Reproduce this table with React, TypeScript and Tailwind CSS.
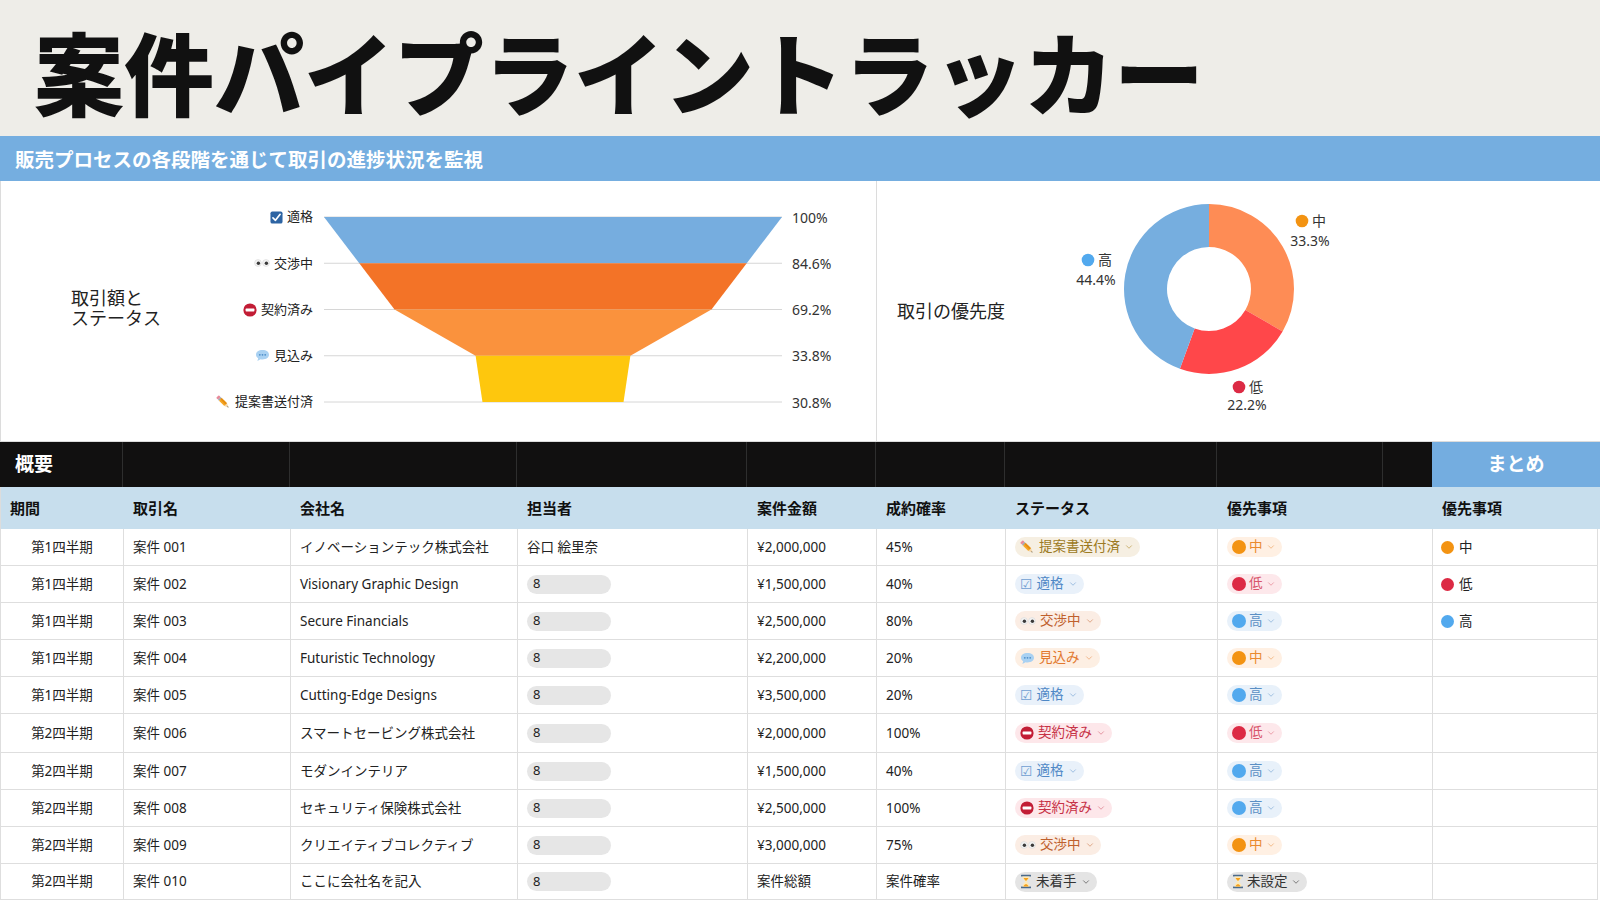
import React from 'react';
import { ChevronDown } from 'lucide-react';

// column widths shared by header and body rows
const COLS = ['w-[123px]', 'w-[167px]', 'w-[227px]', 'w-[230px]', 'w-[129px]', 'w-[129px]', 'w-[212px]', 'w-[215px]', 'w-[168px]'];
const ROW_H = ['h-[37px]', 'h-[37px]', 'h-[37px]', 'h-[37px]', 'h-[37px]', 'h-[39px]', 'h-[37px]', 'h-[37px]', 'h-[37px]', 'h-[36px]'];

const CheckBoxIcon = () => (
  <svg width="13" height="13" viewBox="0 0 14 14">
    <rect x="0.5" y="0.5" width="13" height="13" rx="2" fill="#2d64a3" />
    <path d="M3.2 7.4 L5.9 10 L10.9 3.6" stroke="#fff" strokeWidth="1.8" fill="none" strokeLinecap="round" strokeLinejoin="round" />
  </svg>
);

const EyesIcon = () => (
  <svg width="16" height="10" viewBox="0 0 16 10">
    <circle cx="4" cy="5" r="3.4" fill="#f4f4f4" stroke="#d6d6d6" strokeWidth="0.6" />
    <circle cx="4.4" cy="5.3" r="1.7" fill="#3a3a3a" />
    <circle cx="12" cy="5" r="3.4" fill="#f4f4f4" stroke="#d6d6d6" strokeWidth="0.6" />
    <circle cx="12.4" cy="5.3" r="1.7" fill="#3a3a3a" />
  </svg>
);

const NoEntryIcon = () => (
  <svg width="14" height="14" viewBox="0 0 14 14">
    <circle cx="7" cy="7" r="6.6" fill="#c21d35" />
    <rect x="2.6" y="5.6" width="8.8" height="2.8" rx="0.6" fill="#fff" />
  </svg>
);

const SpeechIcon = () => (
  <svg width="15" height="13" viewBox="0 0 15 13">
    <path d="M7.5 1 C11.4 1 14 3.1 14 5.7 C14 8.3 11.4 10.4 7.5 10.4 C6.8 10.4 6.2 10.3 5.6 10.2 L2.4 12 L3.2 9.3 C1.8 8.4 1 7.1 1 5.7 C1 3.1 3.6 1 7.5 1 Z" fill="#a9d1f2" />
    <circle cx="4.8" cy="5.8" r="0.9" fill="#4f8fc9" />
    <circle cx="7.5" cy="5.8" r="0.9" fill="#4f8fc9" />
    <circle cx="10.2" cy="5.8" r="0.9" fill="#4f8fc9" />
  </svg>
);

// diagonal pencil, eraser at top-left, point at bottom-right
const PencilIcon = () => (
  <svg width="15" height="15" viewBox="0 0 15 15">
    <g transform="rotate(-45 7.5 7.5)">
      <rect x="5.6" y="-1" width="3.8" height="2.6" rx="0.8" fill="#e8899a" />
      <rect x="5.6" y="1.6" width="3.8" height="1.4" fill="#9aa3ad" />
      <rect x="5.6" y="3" width="3.8" height="7.6" fill="#f6a623" />
      <rect x="7.5" y="3" width="1.9" height="7.6" fill="#e58e12" />
      <path d="M5.6 10.6 L9.4 10.6 L7.5 14.6 Z" fill="#f4d4a4" />
      <path d="M6.9 13.3 L8.1 13.3 L7.5 14.6 Z" fill="#333" />
    </g>
  </svg>
);

const HourglassIcon = () => (
  <svg width="12" height="15" viewBox="0 0 12 15">
    <rect x="1" y="0.8" width="10" height="1.8" rx="0.5" fill="#4b6a8a" />
    <rect x="1" y="12.4" width="10" height="1.8" rx="0.5" fill="#4b6a8a" />
    <path d="M2.4 2.6 L9.6 2.6 C9.6 5.2 7.4 6.4 6.6 7.5 C7.4 8.6 9.6 9.8 9.6 12.4 L2.4 12.4 C2.4 9.8 4.6 8.6 5.4 7.5 C4.6 6.4 2.4 5.2 2.4 2.6 Z" fill="#fde9b8" />
    <path d="M3.6 4 L8.4 4 C7.8 5.4 6.6 6.2 6 7 C5.4 6.2 4.2 5.4 3.6 4 Z" fill="#f6a21e" />
    <path d="M3.4 12.4 C4 10.8 5.2 10.2 6 10.2 C6.8 10.2 8 10.8 8.6 12.4 Z" fill="#f6a21e" />
  </svg>
);

type StatusKey = 'proposal' | 'qualified' | 'negotiating' | 'prospect' | 'closed' | 'notStarted';
type PriorityKey = 'mid' | 'low' | 'high' | 'unset';

const STATUS: Record<StatusKey, { label: string; chip: string; chev: string; icon: React.ReactNode }> = {
  proposal: { label: '提案書送付済', chip: 'bg-[#f6efe2] text-[#9c7a22]', chev: 'text-[#c4a862]', icon: <PencilIcon /> },
  qualified: {
    label: '適格',
    chip: 'bg-[#e9f1fa] text-[#4f88c6]',
    chev: 'text-[#8fb4dc]',
    icon: <span className="font-['DejaVu_Sans',sans-serif] text-[14px] leading-none text-[#6f9fd2]">☑</span>,
  },
  negotiating: { label: '交渉中', chip: 'bg-[#fbede4] text-[#bf602d]', chev: 'text-[#d99a76]', icon: <EyesIcon /> },
  prospect: { label: '見込み', chip: 'bg-[#fdefe3] text-[#e2782e]', chev: 'text-[#eeac7c]', icon: <SpeechIcon /> },
  closed: { label: '契約済み', chip: 'bg-[#fde7ea] text-[#c73246]', chev: 'text-[#e08795]', icon: <NoEntryIcon /> },
  notStarted: { label: '未着手', chip: 'bg-[#e4e4e4] text-[#333333]', chev: 'text-[#666666]', icon: <HourglassIcon /> },
};

const PRIORITY: Record<PriorityKey, { label: string; chip: string; chev: string; dot: string }> = {
  mid: { label: '中', chip: 'bg-[#fff0e3] text-[#ea8a2e]', chev: 'text-[#f0b27a]', dot: 'bg-[#f39312]' },
  low: { label: '低', chip: 'bg-[#fde8eb] text-[#d8556a]', chev: 'text-[#e8939f]', dot: 'bg-[#dc2a44]' },
  high: { label: '高', chip: 'bg-[#e8f1fa] text-[#5a8fc4]', chev: 'text-[#94b8dc]', dot: 'bg-[#52a9ee]' },
  unset: { label: '未設定', chip: 'bg-[#e4e4e4] text-[#333333]', chev: 'text-[#666666]', dot: '' },
};

interface Deal {
  period: string;
  name: string;
  company: string;
  owner?: string;
  amount: string;
  rate: string;
  status: StatusKey;
  priority: PriorityKey;
  summary?: PriorityKey;
}

const DEALS: Deal[] = [
  { period: '第1四半期', name: '案件 001', company: 'イノベーションテック株式会社', owner: '谷口 絵里奈', amount: '¥2,000,000', rate: '45%', status: 'proposal', priority: 'mid', summary: 'mid' },
  { period: '第1四半期', name: '案件 002', company: 'Visionary Graphic Design', amount: '¥1,500,000', rate: '40%', status: 'qualified', priority: 'low', summary: 'low' },
  { period: '第1四半期', name: '案件 003', company: 'Secure Financials', amount: '¥2,500,000', rate: '80%', status: 'negotiating', priority: 'high', summary: 'high' },
  { period: '第1四半期', name: '案件 004', company: 'Futuristic Technology', amount: '¥2,200,000', rate: '20%', status: 'prospect', priority: 'mid' },
  { period: '第1四半期', name: '案件 005', company: 'Cutting-Edge Designs', amount: '¥3,500,000', rate: '20%', status: 'qualified', priority: 'high' },
  { period: '第2四半期', name: '案件 006', company: 'スマートセービング株式会社', amount: '¥2,000,000', rate: '100%', status: 'closed', priority: 'low' },
  { period: '第2四半期', name: '案件 007', company: 'モダンインテリア', amount: '¥1,500,000', rate: '40%', status: 'qualified', priority: 'high' },
  { period: '第2四半期', name: '案件 008', company: 'セキュリティ保険株式会社', amount: '¥2,500,000', rate: '100%', status: 'closed', priority: 'high' },
  { period: '第2四半期', name: '案件 009', company: 'クリエイティブコレクティブ', amount: '¥3,000,000', rate: '75%', status: 'negotiating', priority: 'mid' },
  { period: '第2四半期', name: '案件 010', company: 'ここに会社名を記入', amount: '案件総額', rate: '案件確率', status: 'notStarted', priority: 'unset' },
];

const FUNNEL_LABELS: { label: string; icon: React.ReactNode; pct: string }[] = [
  { label: '適格', icon: <CheckBoxIcon />, pct: '100%' },
  { label: '交渉中', icon: <EyesIcon />, pct: '84.6%' },
  { label: '契約済み', icon: <NoEntryIcon />, pct: '69.2%' },
  { label: '見込み', icon: <SpeechIcon />, pct: '33.8%' },
  { label: '提案書送付済', icon: <PencilIcon />, pct: '30.8%' },
];

const FUNNEL_WIDTHS = [100, 84.6, 69.2, 33.8, 30.8];
const FUNNEL_COLORS = ['#76addf', '#f37327', '#fa923d', '#fec70d'];

const FunnelChart = () => {
  const cx = 552;
  const full = 458;
  const top = 217;
  const step = 46.25;
  const half = (p: number) => (full * p) / 100 / 2;
  return (
    <svg width="468" height="195" viewBox="318 212 468 195" className="mt-[18px] shrink-0">
      {FUNNEL_WIDTHS.map((_, i) => (
        <line key={i} x1="323" x2="781" y1={top + i * step} y2={top + i * step} stroke="#d6d6d6" strokeWidth="1" />
      ))}
      {FUNNEL_COLORS.map((c, i) => {
        const y0 = top + i * step;
        const y1 = top + (i + 1) * step;
        const a = half(FUNNEL_WIDTHS[i]);
        const b = half(FUNNEL_WIDTHS[i + 1]);
        return <polygon key={c} points={`${cx - a},${y0} ${cx + a},${y0} ${cx + b},${y1} ${cx - b},${y1}`} fill={c} />;
      })}
    </svg>
  );
};

const arcPath = (cx: number, cy: number, R: number, r: number, a0: number, a1: number) => {
  const rad = (d: number) => (d * Math.PI) / 180;
  const pt = (rr: number, a: number) => `${cx + rr * Math.sin(rad(a))},${cy - rr * Math.cos(rad(a))}`;
  const large = a1 - a0 > 180 ? 1 : 0;
  return `M${pt(R, a0)} A${R},${R} 0 ${large} 1 ${pt(R, a1)} L${pt(r, a1)} A${r},${r} 0 ${large} 0 ${pt(r, a0)} Z`;
};

const DonutChart = () => {
  const cx = 1209;
  const cy = 289;
  const textProps = { fontSize: 14, fill: '#333', fontFamily: "'Noto Sans', 'Noto Sans CJK JP', sans-serif" };
  return (
    <svg width="300" height="261" viewBox="1059 181 300 261" className="shrink-0">
      <path d={arcPath(cx, cy, 85, 42, 0, 120)} fill="#fe8c55" />
      <path d={arcPath(cx, cy, 85, 42, 120, 200)} fill="#ff474a" />
      <path d={arcPath(cx, cy, 85, 42, 200, 360)} fill="#76aedf" />

      <circle cx="1302" cy="221" r="6.3" fill="#f39312" />
      <text x="1312" y="226" {...textProps}>中</text>
      <text x="1310" y="246" textAnchor="middle" {...textProps}>33.3%</text>

      <circle cx="1088" cy="260" r="6.3" fill="#52a9ee" />
      <text x="1098" y="265" {...textProps}>高</text>
      <text x="1096" y="285" textAnchor="middle" {...textProps}>44.4%</text>

      <circle cx="1239" cy="387" r="6.3" fill="#dc2a44" />
      <text x="1249" y="392" {...textProps}>低</text>
      <text x="1247" y="410" textAnchor="middle" {...textProps}>22.2%</text>
    </svg>
  );
};

const StatusChip = ({ k }: { k: StatusKey }) => {
  const s = STATUS[k];
  return (
    <span className={`inline-flex h-[20px] items-center gap-[4px] rounded-full pl-[5px] pr-[6px] text-[13.5px] leading-none ${s.chip}`}>
      {s.icon}
      <span>{s.label}</span>
      <ChevronDown size={10} strokeWidth={2} className={s.chev} />
    </span>
  );
};

const PriorityChip = ({ k }: { k: PriorityKey }) => {
  const p = PRIORITY[k];
  return (
    <span className={`inline-flex h-[20px] items-center gap-[3px] rounded-full pl-[5px] pr-[6px] text-[13.5px] leading-none ${p.chip}`}>
      {k === 'unset' ? <HourglassIcon /> : <span className={`h-[14px] w-[14px] rounded-full ${p.dot}`} />}
      <span>{p.label}</span>
      <ChevronDown size={10} strokeWidth={2} className={p.chev} />
    </span>
  );
};

const Cell = ({ i, children, center = false }: { i: number; children?: React.ReactNode; center?: boolean }) => (
  <div className={`${COLS[i]} flex h-full shrink-0 items-center border-r border-[#dedede] ${center ? 'justify-center' : 'pl-[9px]'}`}>
    {children}
  </div>
);

const HEADERS = ['期間', '取引名', '会社名', '担当者', '案件金額', '成約確率', 'ステータス', '優先事項', '優先事項'];

export default function App() {
  return (
    <div className="h-[900px] w-[1600px] overflow-hidden bg-white font-['Noto_Sans','Noto_Sans_CJK_JP',sans-serif] text-[#222]">
      {/* Title */}
      <div className="h-[136px] bg-[#eeede8] pl-[34px] pt-[25px]">
        <h1 className="font-['Noto_Sans_CJK_JP',sans-serif] text-[90px] font-black leading-none text-[#111]">案件パイプライントラッカー</h1>
      </div>
      <div className="flex h-[45px] items-center bg-[#75aee0] pl-[15px]">
        <p className="font-['Noto_Sans_CJK_JP',sans-serif] text-[19.5px] font-bold text-white">販売プロセスの各段階を通じて取引の進捗状況を監視</p>
      </div>

      {/* Charts */}
      <div className="flex h-[261px] border-b border-l border-[#dcdcdc]">
        <div className="flex w-[876px] shrink-0 items-start border-r border-[#dcdcdc] pl-[70px] pt-[13px]">
          <div className="mb-[20px] w-[130px] shrink-0 self-center text-[18px] leading-[20px] text-[#222]">
            取引額と
            <br />
            ステータス
          </div>
          <div className="flex w-[112px] shrink-0 flex-col">
            {FUNNEL_LABELS.map((f) => (
              <div key={f.label} className="flex h-[46.25px] items-center justify-end gap-[4px] text-[13px] text-[#222]">
                {f.icon}
                <span>{f.label}</span>
              </div>
            ))}
          </div>
          <div className="w-[6px] shrink-0" />
          <FunnelChart />
          <div className="ml-[5px] flex flex-col">
            {FUNNEL_LABELS.map((f) => (
              <div key={f.pct} className="flex h-[46.25px] items-center text-[14px] text-[#333]">
                {f.pct}
              </div>
            ))}
          </div>
        </div>
        <div className="flex flex-1 items-center pl-[20px]">
          <div className="w-[162px] shrink-0 text-[18px] text-[#222]">取引の優先度</div>
          <DonutChart />
        </div>
      </div>

      {/* Table section header */}
      <div className="flex h-[45px] bg-[#111010] text-white">
        <div className="flex w-[123px] items-center border-r border-[#2e2e2e] pl-[15px] text-[19px] font-bold">概要</div>
        <div className="w-[167px] border-r border-[#2e2e2e]" />
        <div className="w-[227px] border-r border-[#2e2e2e]" />
        <div className="w-[230px] border-r border-[#2e2e2e]" />
        <div className="w-[129px] border-r border-[#2e2e2e]" />
        <div className="w-[129px] border-r border-[#2e2e2e]" />
        <div className="w-[212px] border-r border-[#2e2e2e]" />
        <div className="w-[166px] border-r border-[#2e2e2e]" />
        <div className="w-[49px]" />
        <div className="flex flex-1 items-center justify-center bg-[#74ade0] text-[19px] font-bold">まとめ</div>
      </div>

      {/* Column headers */}
      <div className="flex h-[42px] border-l border-[#dcdcdc] bg-[#c7deed] text-[15px] font-bold text-[#111]">
        {HEADERS.map((h, i) => (
          <div key={i} className={`${COLS[i]} flex shrink-0 items-center pl-[9px]`}>
            {h}
          </div>
        ))}
      </div>

      {/* Rows */}
      {DEALS.map((d, r) => (
        <div key={d.name} className={`flex ${ROW_H[r]} w-[1598px] border-b border-l border-[#dedede] text-[13.5px]`}>
          <Cell i={0} center>
            {d.period}
          </Cell>
          <Cell i={1}>{d.name}</Cell>
          <Cell i={2}>{d.company}</Cell>
          <Cell i={3}>
            {d.owner ? (
              d.owner
            ) : (
              <span className="flex h-[19px] w-[84px] items-center rounded-full bg-[#e6e6e6] pl-[6px] text-[13px]">8</span>
            )}
          </Cell>
          <Cell i={4}>{d.amount}</Cell>
          <Cell i={5}>{d.rate}</Cell>
          <Cell i={6}>
            <StatusChip k={d.status} />
          </Cell>
          <Cell i={7}>
            <PriorityChip k={d.priority} />
          </Cell>
          <div className="flex h-full flex-1 items-center gap-[5px] border-r border-[#dedede] pl-[8px]">
            {d.summary && (
              <>
                <span className={`h-[13px] w-[13px] rounded-full ${PRIORITY[d.summary].dot}`} />
                <span>{PRIORITY[d.summary].label}</span>
              </>
            )}
          </div>
        </div>
      ))}
    </div>
  );
}
